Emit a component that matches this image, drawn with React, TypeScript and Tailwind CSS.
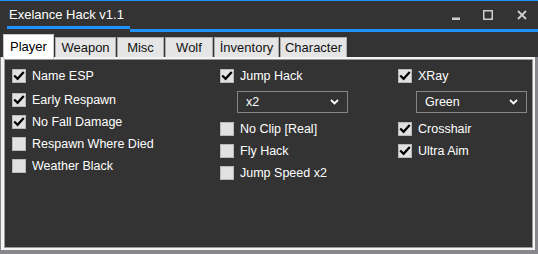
import React from "react";

const FONT = { fontFamily: '"Liberation Sans", Arial, sans-serif' };

function Check({ checked }: { checked: boolean }) {
  return (
    <div className="w-[14px] h-[14px] bg-[#e1e1e1] border border-[#b9b9b9] flex items-center justify-center shrink-0">
      {checked && (
        <svg width="12" height="12" viewBox="0 0 12 12">
          <path d="M2 6.2 L4.6 8.8 L10 2.8" stroke="#000" strokeWidth="2.2" fill="none" strokeLinecap="square" />
        </svg>
      )}
    </div>
  );
}

function Row({ label, checked }: { label: string; checked: boolean }) {
  return (
    <div className="h-[22px] flex items-center gap-[6px]">
      <Check checked={checked} />
      <span className="text-white text-[12.5px] leading-none whitespace-nowrap">{label}</span>
    </div>
  );
}

function Select({ value }: { value: string }) {
  return (
    <div className="w-[111px] h-[22px] border border-[#858585] bg-[#333333] flex items-center justify-between pl-[8px] pr-[8px]">
      <span className="text-white text-[12.5px] leading-none">{value}</span>
      <svg width="9" height="6" viewBox="0 0 9 6">
        <path d="M1 1 L4.5 4.5 L8 1" stroke="#fff" strokeWidth="1.8" fill="none" />
      </svg>
    </div>
  );
}

const tabs = [
  { name: "Player", w: "w-[51px]" },
  { name: "Weapon", w: "w-[61px]" },
  { name: "Misc", w: "w-[47px]" },
  { name: "Wolf", w: "w-[48px]" },
  { name: "İnventory", w: "w-[65px]" },
  { name: "Character", w: "w-[67px]" },
];

export default function App() {
  return (
    <div className="w-[538px] h-[254px] bg-[#333333] border-t border-[#1e90ff] flex flex-col overflow-hidden" style={FONT}>
      {/* Title bar */}
      <div className="h-[31px] flex shrink-0">
        <div className="ml-[7px] h-[28px] border-b-[3px] border-[#1e90ff] pl-[2px] pr-[6px] flex items-center">
          <span className="text-white text-[13px] leading-none pt-[2px]">Exelance Hack v1.1</span>
        </div>
        <div className="flex-1 h-full border-b-[3px] border-[#1e90ff] flex justify-end items-start pt-[9px] pr-[11px]">
          <svg width="8" height="10" viewBox="0 0 8 10" className="mr-[23px]">
            <rect x="0" y="7.5" width="8" height="2.5" fill="#cfcfcf" />
          </svg>
          <svg width="10" height="10" viewBox="0 0 10 10" className="mr-[24px]">
            <rect x="0.75" y="0.75" width="8.5" height="8.5" stroke="#cfcfcf" strokeWidth="1.5" fill="none" />
          </svg>
          <svg width="10" height="10" viewBox="0 0 10 10">
            <path d="M1 1 L9 9 M9 1 L1 9" stroke="#cfcfcf" strokeWidth="1.8" />
          </svg>
        </div>
      </div>
      {/* Tabs */}
      <div className="h-[25px] flex items-end pl-[3px] gap-[1px] shrink-0 relative z-10">
        {tabs.map((t, i) =>
          i === 0 ? (
            <div key={t.name} className={`${t.w} h-[25px] -mb-[2px] bg-white border border-b-0 border-[#c8c8c8] flex items-center justify-center text-[13px] text-black leading-none`}>
              <span className="pb-[2px]">{t.name}</span>
            </div>
          ) : (
            <div key={t.name} className={`${t.w} h-[20px] bg-[#e5e5e5] border border-b-0 border-[#ababab] flex items-center justify-center text-[13px] text-[#111] leading-none`}>
              {t.name}
            </div>
          )
        )}
      </div>
      {/* Panel */}
      <div className="flex-1 bg-[#f4f4f4] border-l border-r-[3px] border-b-[4px] border-[#86868c] pl-[3px] pr-[2px] pt-[2px] pb-[2px] flex">
        <div className="flex-1 bg-[#333333] border border-[#9a9a9a] pl-[7px] pt-[5px] grid grid-cols-[208px_178px_1fr] content-start">
          <div className="flex flex-col gap-[0px]">
            <div className="mb-[2px]"><Row label="Name ESP" checked /></div>
            <Row label="Early Respawn" checked />
            <Row label="No Fall Damage" checked />
            <Row label="Respawn Where Died" checked={false} />
            <Row label="Weather Black" checked={false} />
          </div>
          <div className="flex flex-col">
            <Row label="Jump Hack" checked />
            <div className="mt-[4px] mb-[5px] ml-[17px]"><Select value="x2" /></div>
            <Row label="No Clip [Real]" checked={false} />
            <Row label="Fly Hack" checked={false} />
            <Row label="Jump Speed x2" checked={false} />
          </div>
          <div className="flex flex-col">
            <Row label="XRay" checked />
            <div className="mt-[4px] mb-[5px] ml-[18px]"><Select value="Green" /></div>
            <Row label="Crosshair" checked />
            <Row label="Ultra Aim" checked />
          </div>
        </div>
      </div>
    </div>
  );
}
